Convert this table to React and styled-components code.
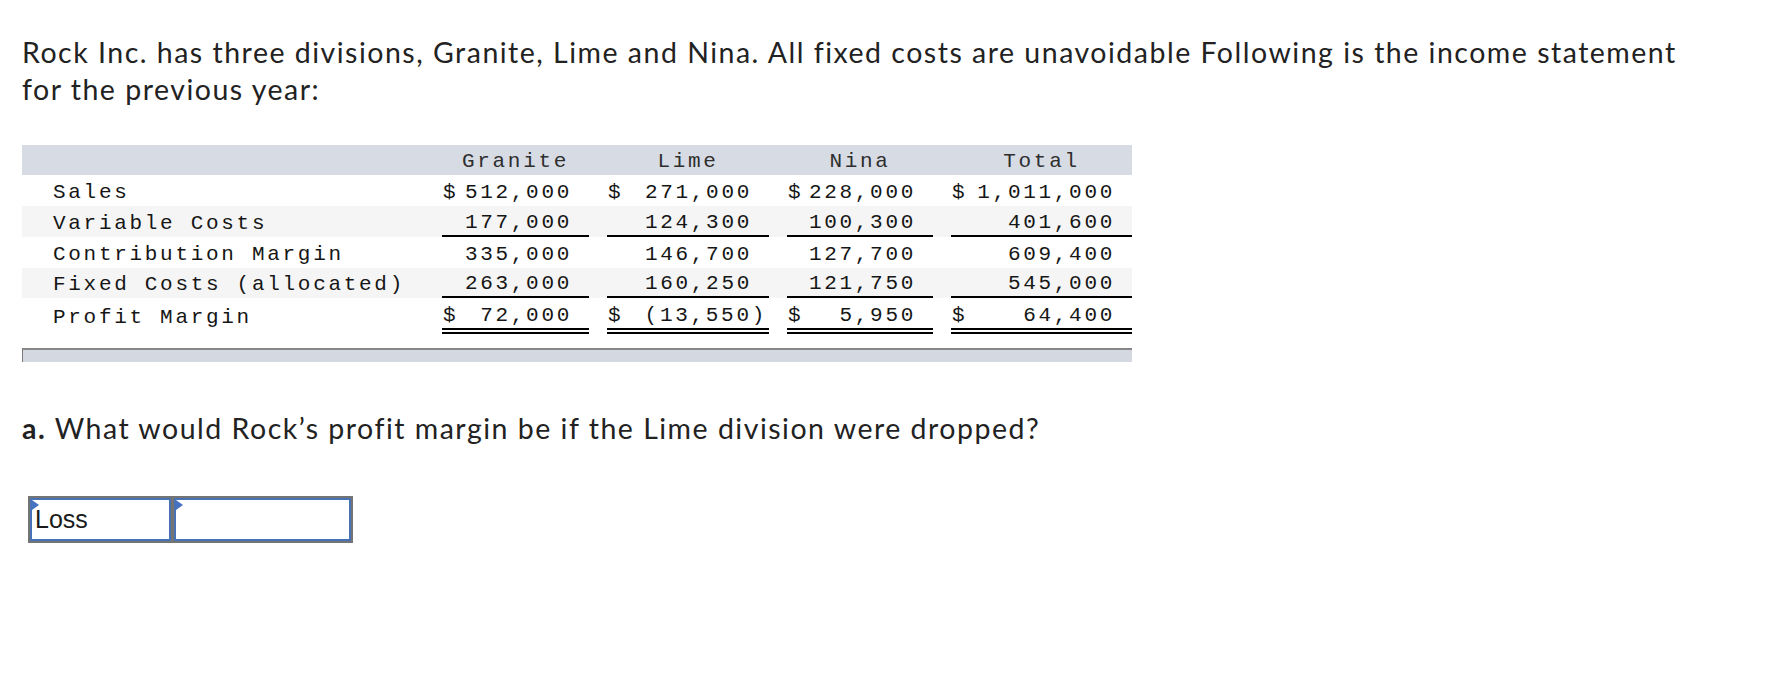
import React from 'react';
import styled, { createGlobalStyle } from 'styled-components';

const GlobalStyle = createGlobalStyle`
	body {
		margin: 0;
		background: #ffffff;
	}
`;

const Page = styled.div`
	padding: 0 0 40px 22px;
	font-family: Lato, "Open Sans", sans-serif;
	color: #222222;
`;

const Intro = styled.p`
	margin: 0;
	padding-top: 34px;
	width: 1690px;
	font-size: 28.5px;
	letter-spacing: 1.5px;
	line-height: 37px;
`;

const Table = styled.div`
	margin-top: 37px;
	width: 1110px;
	font-family: "Liberation Mono", monospace;
	font-size: 21px;
	letter-spacing: 2.7px;
	color: #161616;
`;

const Row = styled.div`
	display: grid;
	grid-template-columns: 402px 147px 162px 146px 181px;
	column-gap: 18px;
	background: ${props => props.$bg || '#ffffff'};
`;

const HeadCell = styled.div`
	height: 30px;
	box-sizing: border-box;
	padding-top: 3px;
	display: flex;
	align-items: center;
	justify-content: center;
	color: #2e2e2e;
`;

const Label = styled.div`
	display: flex;
	align-items: center;
	padding: 3px 0 0 31px;
	height: ${props => props.$h || 31}px;
	box-sizing: border-box;
	white-space: pre;
`;

const Value = styled.div`
	display: flex;
	align-items: center;
	justify-content: space-between;
	box-sizing: border-box;
	height: ${props => props.$h || 31}px;
	padding: ${props => props.$top || 3}px 17px 0 1px;
	border-bottom: ${props =>
		props.$line === 'single' ? '2px solid #000000' :
		props.$line === 'double' ? '6px double #000000' : 'none'};
	white-space: pre;
`;

const Num = styled.span`
	margin-left: auto;
	margin-right: ${props => (props.$hang ? '-15px' : '0')};
`;

const Spacer = styled.div`
	height: 14px;
	background: #ffffff;
`;

const BottomBar = styled.div`
	height: 14px;
	box-sizing: border-box;
	background: #d3d8e1;
	border-top: 2px solid #878787;
	border-left: 1px solid #7a7a7a;
`;

const Question = styled.p`
	margin: 48px 0 0 0;
	font-size: 28.5px;
	letter-spacing: 1.5px;
	line-height: 37px;

	b {
		font-weight: 700;
	}
`;

const AnswerRow = styled.div`
	display: inline-flex;
	gap: 3px;
	padding: 2px;
	margin: 49px 0 0 6px;
	background: #747474;
`;

const AnswerCell = styled.div`
	position: relative;
	box-sizing: border-box;
	width: ${props => props.$w}px;
	height: 43px;
	display: flex;
	align-items: center;
	padding-left: 3px;
	background: #ffffff;
	border: 2px solid #4772b6;
	font-family: "Liberation Sans", Arial, sans-serif;
	font-size: 25px;
	color: #1a1a1a;
`;

const Marker = styled.span`
	position: absolute;
	top: 0;
	left: 0;
	width: 0;
	height: 0;
	border-top: 5px solid transparent;
	border-bottom: 5px solid transparent;
	border-left: 7px solid #4673c1;
`;

const columns = ['Granite', 'Lime', 'Nina', 'Total'];

const rows = [
	{ label: 'Sales', bg: '#ffffff', cells: [['$', '512,000'], ['$', '271,000'], ['$', '228,000'], ['$', '1,011,000']] },
	{ label: 'Variable Costs', bg: '#f5f5f5', line: 'single', cells: [['', '177,000'], ['', '124,300'], ['', '100,300'], ['', '401,600']] },
	{ label: 'Contribution Margin', bg: '#ffffff', cells: [['', '335,000'], ['', '146,700'], ['', '127,700'], ['', '609,400']] },
	{ label: 'Fixed Costs (allocated)', bg: '#f5f5f5', line: 'single', h: 30, cells: [['', '263,000'], ['', '160,250'], ['', '121,750'], ['', '545,000']] },
	{ label: 'Profit Margin', bg: '#ffffff', line: 'double', h: 36, top: 4, cells: [['$', '72,000'], ['$', '(13,550)', true], ['$', '5,950'], ['$', '64,400']] }
];

class App extends React.Component {
	render() {
		return (
			<Page>
				<GlobalStyle />
				<Intro>
					Rock Inc. has three divisions, Granite, Lime and Nina. All fixed costs are unavoidable Following is the income statement for the previous year:
				</Intro>

				<Table>
					<Row $bg="#d7dce4">
						<HeadCell />
						{columns.map(c => <HeadCell key={c}>{c}</HeadCell>)}
					</Row>
					{rows.map(r => (
						<Row key={r.label} $bg={r.bg}>
							<Label $h={r.h}>{r.label}</Label>
							{r.cells.map((c, i) => (
								<Value key={i} $h={r.h} $top={r.top} $line={r.line}>
									<span>{c[0]}</span>
									<Num $hang={c[2]}>{c[1]}</Num>
								</Value>
							))}
						</Row>
					))}
					<Spacer />
					<BottomBar />
				</Table>

				<Question>
					<b>a.</b> What would Rock’s profit margin be if the Lime division were dropped?
				</Question>

				<AnswerRow>
					<AnswerCell $w={141}>
						<Marker />
						Loss
					</AnswerCell>
					<AnswerCell $w={177}>
						<Marker />
					</AnswerCell>
				</AnswerRow>
			</Page>
		);
	}
}

export default App;
